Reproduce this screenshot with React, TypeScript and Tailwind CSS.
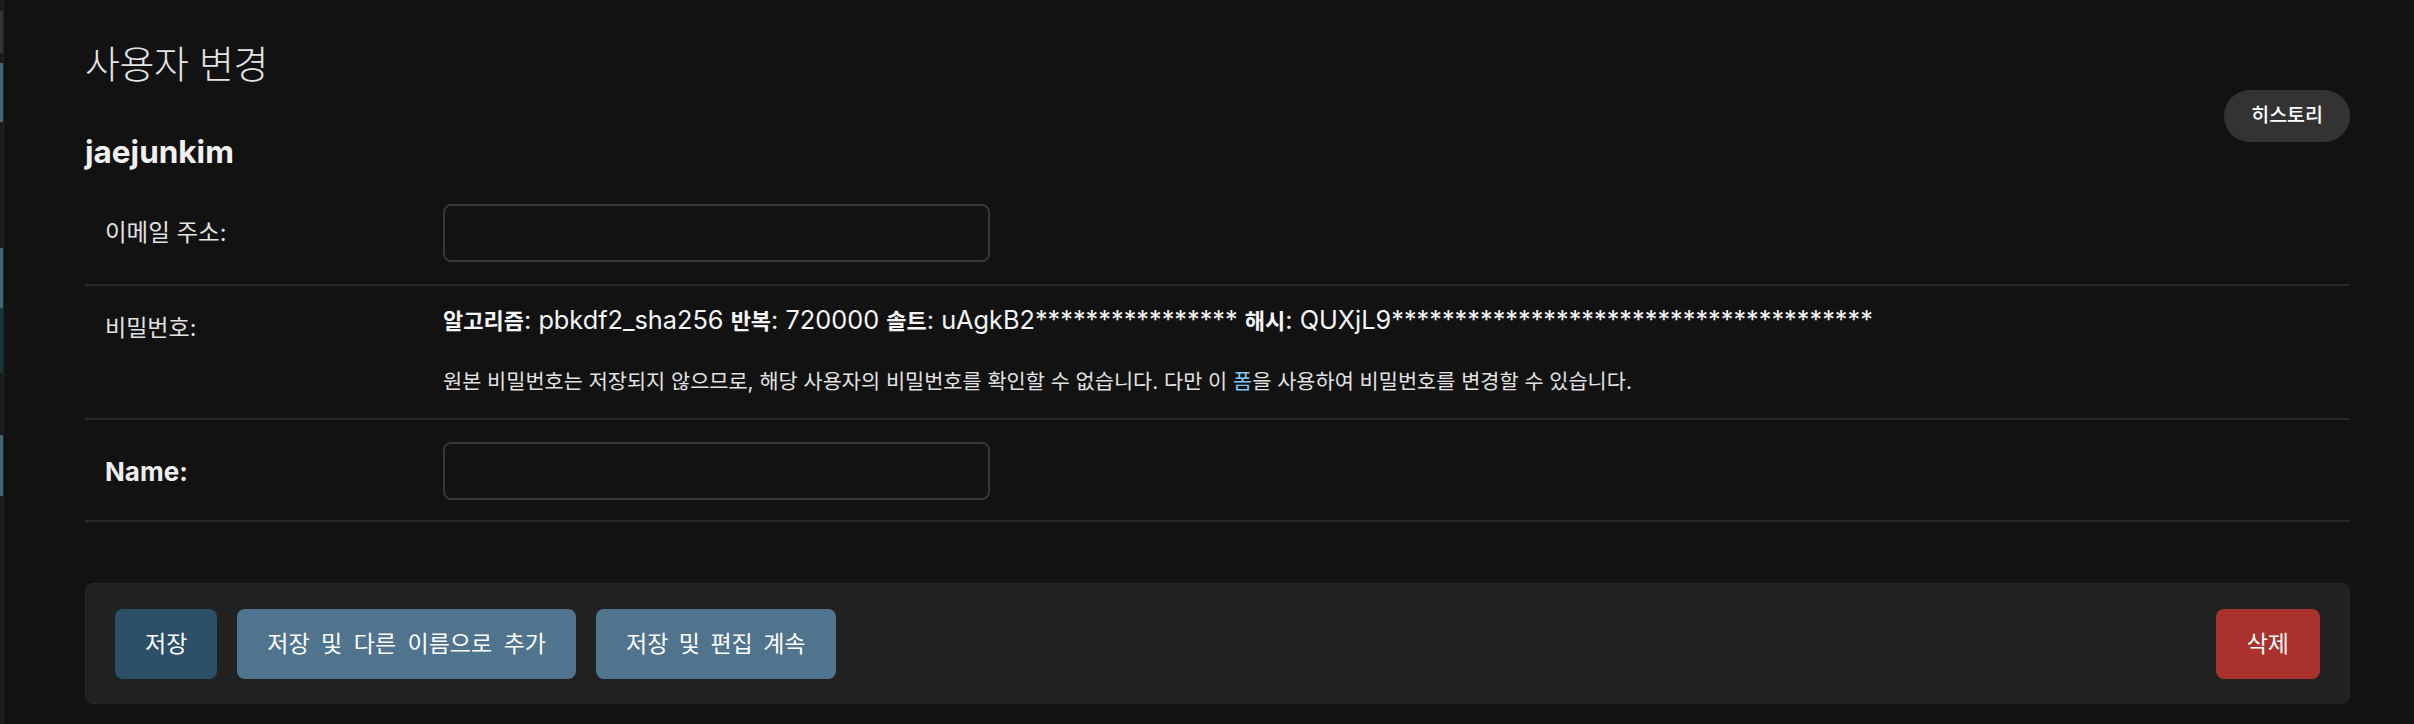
import React from 'react';

const stripSegments = [
  { h: 'h-[11px]', c: 'bg-[#1b1b1b]' },
  { h: 'h-[42px]', c: 'bg-[#333333]' },
  { h: 'h-[10px]', c: 'bg-[#1b1b1b]' },
  { h: 'h-[59px]', c: 'bg-[#44647a]' },
  { h: 'h-[65px]', c: 'bg-[#1b1b1b]' },
  { h: 'h-[61px]', c: 'bg-[#1b1b1b] border-t border-[#2a2a2a]' },
  { h: 'h-[60px]', c: 'bg-[#44647a]' },
  { h: 'h-[65px]', c: 'bg-[#17343a]' },
  { h: 'h-[62px]', c: 'bg-[#1b1b1b]' },
  { h: 'h-[61px]', c: 'bg-[#44647a]' },
  { h: 'h-[65px]', c: 'bg-[#1b1b1b]' },
  { h: 'flex-1', c: 'bg-[#1b1b1b] border-t border-[#2a2a2a]' },
];

const HashField = ({ label, value }: { label: string; value: string }) => (
  <>
    <strong className="text-[22px] font-bold">{label}</strong>: {value}{' '}
  </>
);

const App: React.FC = () => {
  return (
    <div className="flex min-h-[724px] bg-[#121212] text-[#eeeeee] font-['Inter','Noto_Sans_CJK_KR',sans-serif]">
      {/* collapsed nav sidebar edge */}
      <div className="flex w-[4px] shrink-0">
        <div className="flex w-[3px] flex-col">
          {stripSegments.map((s, i) => (
            <div key={i} className={`${s.h} ${s.c}`} />
          ))}
        </div>
        <div className="w-[1px] bg-[#242424]" />
      </div>

      <main className="flex-1 pl-[81px] pr-[64px]">
        <div className="flex justify-between">
          <div>
            <h1 className="mt-[40px] text-[38px] font-light leading-[48px] tracking-[-0.4px] text-[#e4e4e4]">
              사용자 변경
            </h1>
            <h2 className="mt-[44px] text-[31.5px] font-bold leading-[40px] text-[#f0f0f0]">jaejunkim</h2>
          </div>
          <button className="mt-[90px] h-[52px] rounded-full bg-[#333333] px-[27px] text-[19.5px] font-medium text-white">
            히스토리
          </button>
        </div>

        <form className="mt-[12px]">
          {/* email */}
          <div className="flex items-center border-b-2 border-[#2a2a2a] pt-[20px] pb-[22px]">
            <label className="w-[358px] shrink-0 pl-[20px] text-[23.5px] text-[#e2e2e2]">이메일 주소:</label>
            <input
              type="text"
              className="h-[58px] w-[547px] rounded-[8px] border-2 border-[#363636] bg-[#121212] px-[12px] text-[24px] outline-none"
            />
          </div>

          {/* password */}
          <div className="flex border-b-2 border-[#2a2a2a] pt-[16px] pb-[20px]">
            <label className="w-[358px] shrink-0 pt-[10px] pl-[20px] text-[23px] leading-[32px] text-[#e2e2e2]">
              비밀번호:
            </label>
            <div>
              <p className="text-[25.3px] leading-[36px] text-[#f5f5f5]">
                <HashField label="알고리즘" value="pbkdf2_sha256" />
                <HashField label="반복" value="720000" />
                <HashField label="솔트" value="uAgkB2****************" />
                <strong className="text-[22px] font-bold">해시</strong>: QUXjL9**************************************
              </p>
              <p className="mt-[27px] text-[20.8px] leading-[32px] text-[#e2e2e2]">
                원본 비밀번호는 저장되지 않으므로, 해당 사용자의 비밀번호를 확인할 수 없습니다. 다만 이{' '}
                <a className="text-[#81c8f0]">폼</a>을 사용하여 비밀번호를 변경할 수 있습니다.
              </p>
            </div>
          </div>

          {/* name */}
          <div className="flex items-center border-b-2 border-[#2a2a2a] pt-[22px] pb-[20px]">
            <label className="w-[358px] shrink-0 pl-[20px] text-[26px] font-bold text-[#eeeeee]">Name:</label>
            <input
              type="text"
              className="h-[58px] w-[547px] rounded-[8px] border-2 border-[#363636] bg-[#121212] px-[12px] text-[24px] outline-none"
            />
          </div>

          {/* submit row */}
          <div className="mt-[61px] flex items-center justify-between rounded-[8px] border border-[#262626] bg-[#212121] px-[29px] pt-[25px] pb-[24px]">
            <div className="flex gap-[20px]">
              <button type="button" className="h-[70px] rounded-[8px] bg-[#2c5068] px-[30px] text-[23px] text-white">
                저장
              </button>
              <button type="button" className="h-[70px] rounded-[8px] bg-[#50748e] px-[30px] text-[23px] text-white [word-spacing:5px]">
                저장 및 다른 이름으로 추가
              </button>
              <button type="button" className="h-[70px] rounded-[8px] bg-[#50748e] px-[30px] text-[23px] text-white [word-spacing:4px]">
                저장 및 편집 계속
              </button>
            </div>
            <button type="button" className="h-[70px] rounded-[8px] bg-[#aa322c] px-[31px] text-[23px] text-white">
              삭제
            </button>
          </div>
        </form>
      </main>
    </div>
  );
};

export default App;
